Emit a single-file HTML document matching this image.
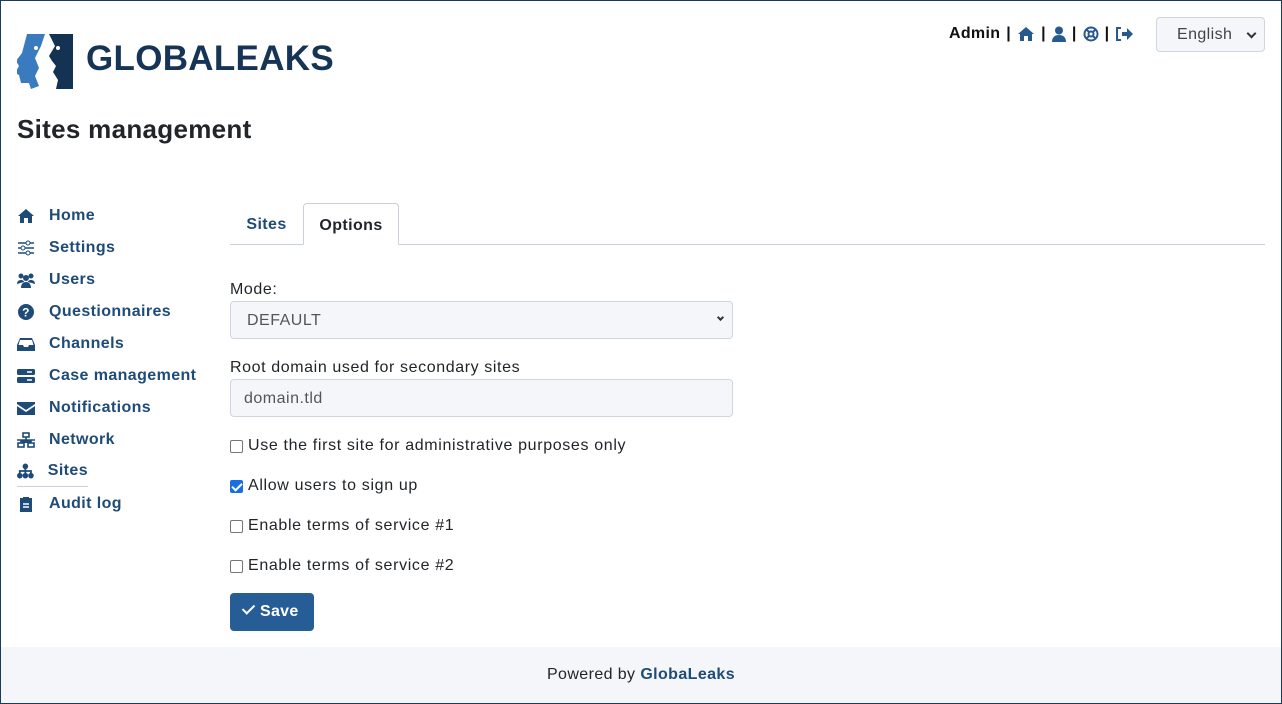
<!DOCTYPE html>
<html><head><meta charset="utf-8"><style>
*{box-sizing:border-box}
html,body{margin:0;width:1282px;height:704px;overflow:hidden;background:#fff;font-family:"Liberation Sans",sans-serif;color:#212529}
.frame{position:absolute;inset:0;border:1px solid #1b3a5c;}
.logo{position:absolute;left:17px;top:33px}
.brand{position:absolute;left:86px;top:39px;font-size:35px;font-weight:bold;color:#163456;letter-spacing:0.3px}
h1{position:absolute;left:17px;top:114px;margin:0;font-size:26px;font-weight:bold;color:#212529;letter-spacing:0.3px}
.top{position:absolute;left:949px;top:25px;font-size:16px;font-weight:bold;display:flex;align-items:center;gap:6px;color:#111;letter-spacing:0.3px}
.top svg{fill:#265a8e}
.lang{position:absolute;left:1156px;top:17px;width:109px;height:35px;border:1px solid #cfd6e0;border-radius:4px;background:#f5f6fa;font-size:16px;color:#444;padding:8px 0 0 20px;letter-spacing:0.4px}
.lang:after{content:"";position:absolute;right:9px;top:12px;width:5px;height:5px;border-right:2px solid #333;border-bottom:2px solid #333;transform:rotate(45deg)}
.nav{position:absolute;left:17px;top:200px}
.nav div{height:32px;display:flex;align-items:center;font-size:16px;font-weight:bold;color:#1f4b78;letter-spacing:0.4px}
.nav svg{width:18px;height:16px;margin-right:14px;fill:#1f4b78}
.tabs{position:absolute;left:230px;top:244px;width:1035px;border-top:1px solid #c8d0dc}
.tab{position:absolute;top:203px;height:42px;font-size:16px;font-weight:bold;color:#1f4b78;padding-top:13px;text-align:center;letter-spacing:0.4px}
.tab.act{border:1px solid #c8d0dc;border-bottom:1px solid #fff;border-radius:4px 4px 0 0;background:#fff;color:#212529}
.lbl{position:absolute;left:230px;font-size:16px;color:#212529;letter-spacing:0.6px}
.inp{position:absolute;left:230px;width:503px;height:38px;border:1px solid #cfd6e0;border-radius:4px;background:#f5f6fa;font-size:16px;color:#555;padding:10px 0 0 16px;letter-spacing:0.5px}
.chk{position:absolute;left:230px;font-size:16px;display:flex;align-items:center;letter-spacing:0.65px}
.chk i{display:inline-block;width:13px;height:13px;border:1px solid #767676;border-radius:2px;margin-right:5px;background:#fff}
.chk i.on{background:#1a6fe0;border-color:#1a6fe0;position:relative}
.chk i.on:after{content:"";position:absolute;left:3px;top:0;width:4px;height:8px;border-right:2px solid #fff;border-bottom:2px solid #fff;transform:rotate(45deg)}
.btn{position:absolute;left:230px;top:593px;width:84px;height:38px;background:#275d96;border-radius:4px;color:#fff;font-weight:bold;font-size:16px;padding:10px 0 0 13px;letter-spacing:0.3px}
.foot{position:absolute;left:1px;right:1px;top:647px;bottom:1px;background:#f5f6fa;text-align:center;font-size:16px;padding-top:19px;letter-spacing:0.4px}
.foot b{color:#1f4b78}
</style></head><body>
<div class="frame"></div>
<svg class="logo" width="58" height="57" viewBox="0 0 58 57">
<path d="M10 1h18l-4 12-6 12 4 10-4 8 4 10 -8 3 -2-6 -8 0 -2-8 -4-2 4-7 -3-5 6-8z" fill="#3a7bbf"/>
<path d="M32 1h24v55h-17l2-9-5-8 3-6-4-5 -3-5 6-10z" fill="#143352"/>
<circle cx="19" cy="15" r="2" fill="#fff"/><circle cx="41" cy="15" r="2" fill="#fff"/>
</svg>
<div class="brand">GLOBALEAKS</div>
<h1>Sites management</h1>
<div class="top">Admin <span>|</span>
<svg width="18" height="16" viewBox="0 0 18 16"><path d="M9 1l8 7h-2v7h-4v-5H7v5H3V8H1z"/></svg><span>|</span>
<svg width="14" height="16" viewBox="0 0 14 16"><circle cx="7" cy="4.5" r="4"/><path d="M0 16c0-5 3-7 7-7s7 2 7 7z"/></svg><span>|</span>
<svg width="16" height="16" viewBox="0 0 16 16"><circle cx="8" cy="8" r="6.5" fill="none" stroke="#265a8e" stroke-width="2"/><circle cx="8" cy="8" r="2.5" fill="none" stroke="#265a8e" stroke-width="2"/><path d="M3 3l3 3M13 3l-3 3M3 13l3-3M13 13l-3-3" stroke="#265a8e" stroke-width="2"/></svg><span>|</span>
<svg width="18" height="16" viewBox="0 0 18 16"><path d="M6 2H2v12h4" fill="none" stroke="#265a8e" stroke-width="2"/><path d="M7 6h5V2l6 6-6 6v-4H7z"/></svg>
</div>
<div class="lang">English</div>
<div class="nav">
<div><svg viewBox="0 0 18 16"><path d="M9 1l8 7h-2v7h-4v-5H7v5H3V8H1z"/></svg>Home</div>
<div><svg viewBox="0 0 18 16"><path d="M1 3h16M1 8h16M1 13h16" stroke="#1f4b78" stroke-width="1.5"/><circle cx="11" cy="3" r="2" fill="#fff" stroke="#1f4b78"/><circle cx="6" cy="8" r="2" fill="#fff" stroke="#1f4b78"/><circle cx="11" cy="13" r="2" fill="#fff" stroke="#1f4b78"/></svg>Settings</div>
<div><svg viewBox="0 0 18 16"><circle cx="4" cy="4" r="2.5"/><circle cx="14" cy="4" r="2.5"/><circle cx="9" cy="6" r="3"/><path d="M0 12c0-3 2-4 4-4s3 1 3 2zM18 12c0-3-2-4-4-4s-3 1-3 2zM4 16c0-4 2-6 5-6s5 2 5 6z"/></svg>Users</div>
<div><svg viewBox="0 0 18 16"><circle cx="9" cy="8" r="8"/><text x="9" y="12.5" font-size="12" font-weight="bold" text-anchor="middle" fill="#fff" font-family="Liberation Sans">?</text></svg>Questionnaires</div>
<div><svg viewBox="0 0 18 16"><path d="M3 2h12l3 7v6H0V9z M3 4L1.5 9h4.5l1 2h4l1-2h4.5L15 4z" fill-rule="evenodd"/></svg>Channels</div>
<div><svg viewBox="0 0 18 16"><rect x="0" y="1" width="18" height="6" rx="1.5"/><rect x="0" y="9" width="18" height="6" rx="1.5"/><path d="M10 4h5M10 12h5" stroke="#fff" stroke-width="1.5"/></svg>Case management</div>
<div><svg viewBox="0 0 18 16"><path d="M0 2h18v2l-9 6-9-6z M0 6l9 6 9-6v9H0z"/></svg>Notifications</div>
<div><svg viewBox="0 0 18 16"><rect x="6" y="1" width="6" height="4" fill="none" stroke="#1f4b78" stroke-width="1.6"/><rect x="1" y="11" width="6" height="4" fill="none" stroke="#1f4b78" stroke-width="1.6"/><rect x="11" y="11" width="6" height="4" fill="none" stroke="#1f4b78" stroke-width="1.6"/><path d="M9 5v3M4 11V8h10v3M0 8h18" stroke="#1f4b78" stroke-width="1.6"/></svg>Network</div>
<div style="border-bottom:1px solid #c8d0dc;width:71px;height:31px;margin-bottom:1px"><svg viewBox="0 0 18 16"><circle cx="9" cy="3" r="3"/><circle cx="3" cy="13" r="3"/><circle cx="9" cy="13" r="3"/><circle cx="15" cy="13" r="3"/><path d="M9 3v10M3 13V8h12v5" stroke="#1f4b78" stroke-width="2" fill="none"/></svg>Sites</div>
<div><svg viewBox="0 0 18 16"><path d="M3 2h12v14H3z M6 1h6v3H6z"/><path d="M6 8h6M6 11h6" stroke="#fff" stroke-width="1.5"/></svg>Audit log</div>
</div>
<div class="tabs"></div>
<div class="tab" style="left:230px;width:73px">Sites</div>
<div class="tab act" style="left:303px;width:96px">Options</div>
<div class="lbl" style="top:281px">Mode:</div>
<div class="inp" style="top:301px">DEFAULT<span style="position:absolute;right:9px;top:13px;width:5px;height:5px;border-right:2px solid #333;border-bottom:2px solid #333;transform:rotate(45deg)"></span></div>
<div class="lbl" style="top:359px">Root domain used for secondary sites</div>
<div class="inp" style="top:379px;padding-left:13px">domain.tld</div>
<div class="chk" style="top:437px"><i></i>Use the first site for administrative purposes only</div>
<div class="chk" style="top:477px"><i class="on"></i>Allow users to sign up</div>
<div class="chk" style="top:517px"><i></i>Enable terms of service #1</div>
<div class="chk" style="top:557px"><i></i>Enable terms of service #2</div>
<div class="btn"><span style="display:inline-block;width:7px;height:12px;border-right:2px solid #fff;border-bottom:2px solid #fff;transform:rotate(45deg);margin:0 8px -1px 2px;position:relative;top:-3px"></span>Save</div>
<div class="foot">Powered by <b>GlobaLeaks</b></div>
</body></html>
